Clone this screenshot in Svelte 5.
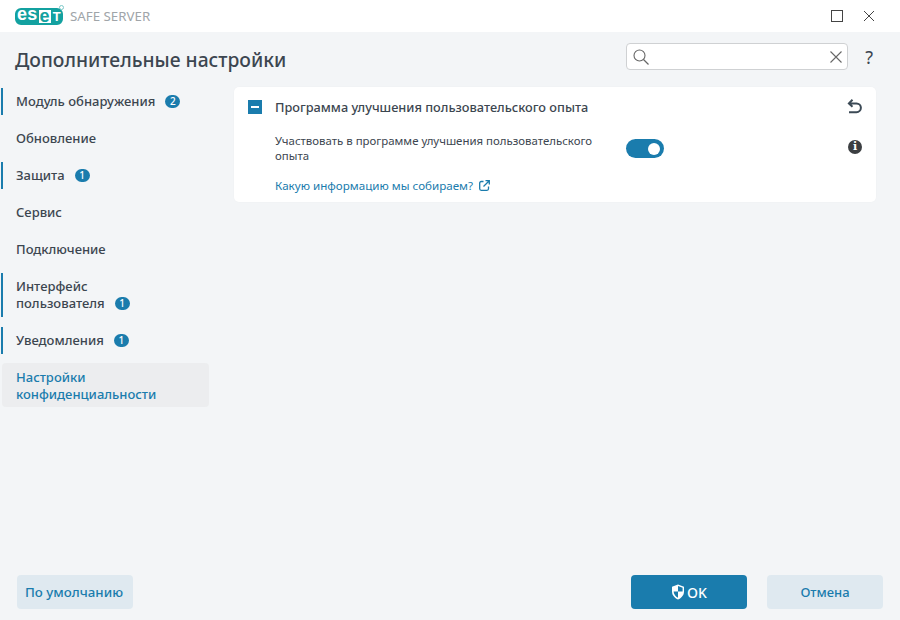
<script lang="ts">
  interface NavItem {
    label: string;
    badge?: number;
    marked?: boolean;
    active?: boolean;
  }

  const items: NavItem[] = [
    { label: "Модуль обнаружения", badge: 2, marked: true },
    { label: "Обновление" },
    { label: "Защита", badge: 1, marked: true },
    { label: "Сервис" },
    { label: "Подключение" },
    { label: "Интерфейс\nпользователя", badge: 1, marked: true },
    { label: "Уведомления", badge: 1, marked: true },
    { label: "Настройки\nконфиденциальности", active: true },
  ];

  let enabled = $state(true);
</script>

<div class="window">
  <header class="titlebar">
    <div class="brand">
      <span class="logo">
        <span class="logo-dark">es</span><span class="logo-light">e</span><span class="logo-t">T</span>
        <span class="reg"></span>
      </span>
      <span class="product">SAFE SERVER</span>
    </div>
    <div class="win-buttons">
      <span class="maximize"></span>
      <svg width="16" height="16" viewBox="0 0 16 16"><path d="M3 3l10 10M13 3L3 13" stroke="#444" stroke-width="1" fill="none" /></svg>
    </div>
  </header>

  <div class="top">
    <h1>Дополнительные настройки</h1>
    <div class="tools">
      <div class="search">
        <svg width="18" height="18" viewBox="0 0 18 18"><circle cx="7.5" cy="7.5" r="5.5" stroke="#666" stroke-width="1.1" fill="none" /><path d="M11.5 11.5l5 5" stroke="#666" stroke-width="1.3" fill="none" /></svg>
        <svg class="clear" width="14" height="14" viewBox="0 0 14 14"><path d="M1.5 1.5l11 11M12.5 1.5l-11 11" stroke="#666" stroke-width="1.1" fill="none" /></svg>
      </div>
      <span class="help">?</span>
    </div>
  </div>

  <div class="main">
    <nav class="sidebar">
      {#each items as item}
        <div class="nav-item" class:marked={item.marked} class:active={item.active}>
          <span class="nav-label">{item.label}{#if item.badge}<span class="badge">{item.badge}</span>{/if}</span>
        </div>
      {/each}
    </nav>

    <section class="content">
      <div class="card">
        <div class="card-head">
          <span class="collapse"></span>
          <span class="card-title">Программа улучшения пользовательского опыта</span>
          <svg class="revert" width="16" height="16" viewBox="0 0 16 16"><path d="M5.500 .8L1.900 4.400l3.600 3.400M2.500 4.400h7a4.400 4.400 0 0 1 0 8.800H2" stroke="#3c4a56" stroke-width="2" fill="none" /></svg>
        </div>
        <div class="setting">
          <span class="setting-text">Участвовать в программе улучшения пользовательского опыта</span>
          <button class="toggle" class:on={enabled} aria-label="toggle" onclick={() => (enabled = !enabled)}><span class="knob"></span></button>
          <span class="info">i</span>
        </div>
        <a class="link" href="#info">Какую информацию мы собираем?
          <svg width="11" height="11" viewBox="0 0 11 11"><path d="M4.500 1.500H2.200A1.500 1.500 0 0 0 .7 3v5.800a1.500 1.500 0 0 0 1.500 1.500H8a1.500 1.500 0 0 0 1.500-1.500V6.500M6.500 .7h3.800v3.800M10 1L4.500 6.500" stroke="#1a7cad" stroke-width="1.300" fill="none" /></svg>
        </a>
      </div>
    </section>
  </div>

  <footer class="footer">
    <button class="btn secondary default">По умолчанию</button>
    <div class="footer-right">
      <button class="btn primary">
        <svg width="14" height="16" viewBox="0 0 14 16"><path d="M7 .5l6 2.200v4.800c0 3.800-2.600 6.500-6 8-3.400-1.500-6-4.200-6-8V2.700z" fill="#fff" /><path d="M7 2l4.600 1.700V7.500H7zM7 7.500H2.600c.2 2.900 2.100 5 4.400 6.300z" fill="#1a7cad" /></svg>
        OK
      </button>
      <button class="btn secondary cancel">Отмена</button>
    </div>
  </footer>
</div>

<style>
  :global(body) {
    margin: 0;
    background: #f3f5f7;
  }

  .window {
    width: 900px;
    height: 620px;
    display: flex;
    flex-direction: column;
    font-family: "Noto Sans", "Open Sans", sans-serif;
    color: #3c4650;
    overflow: hidden;
    background: #f3f5f7;
  }

  .titlebar {
    height: 32px;
    flex: none;
    background: #fff;
    display: flex;
    align-items: center;
    justify-content: space-between;
    padding: 0 23px 0 15px;
  }

  .brand {
    display: flex;
    align-items: center;
    gap: 7px;
  }

  .logo {
    position: relative;
    display: inline-flex;
    align-items: center;
    justify-content: center;
    height: 17px;
    width: 48px;
    box-sizing: border-box;
    border: 2px solid #13a1a0;
    border-radius: 6px;
    background: #13a1a0;
    font-family: "Liberation Sans", sans-serif;
    font-weight: 700;
    font-size: 18px;
    line-height: 13px;
    letter-spacing: 0.3px;
  }

  .logo-dark {
    color: #fff;
    padding-bottom: 3px;
  }

  .logo-light {
    color: #13a1a0;
    background: #fff;
    padding: 0 1px 3px;
    height: 10px;
    margin: 0 1px;
  }

  .logo-t {
    color: #fff;
    font-size: 13px;
    margin-left: 1px;
  }

  .reg {
    position: absolute;
    right: -3px;
    top: -5px;
    width: 3px;
    height: 3px;
    border: 1px solid #7cc9c8;
    border-radius: 50%;
  }

  .product {
    font-size: 13.3px;
    color: #a0a5a9;
  }

  .win-buttons {
    display: flex;
    align-items: center;
    gap: 18px;
  }

  .maximize {
    width: 10px;
    height: 10px;
    border: 1px solid #444;
  }

  .top {
    height: 55px;
    flex: none;
    display: flex;
    align-items: center;
    justify-content: space-between;
    padding: 0 27px 0 15px;
    box-sizing: border-box;
  }

  h1 {
    margin: 0;
    font-size: 19.3px;
    font-weight: 500;
    color: #3c4650;
  }

  .tools {
    display: flex;
    align-items: center;
    gap: 17px;
    margin-bottom: 6px;
  }

  .search {
    width: 222px;
    height: 27px;
    box-sizing: border-box;
    background: #fff;
    border: 1px solid #cfd1d3;
    border-radius: 4px;
    display: flex;
    align-items: center;
    justify-content: space-between;
    padding: 0 4px 0 5px;
  }

  .help {
    font-size: 18px;
    color: #3c4650;
  }

  .main {
    flex: 1;
    display: flex;
    min-height: 0;
  }

  .sidebar {
    width: 208px;
    margin-left: 1px;
    flex: none;
    display: flex;
    flex-direction: column;
    gap: 10px;
    padding-top: 1px;
  }

  .nav-item {
    padding: 5px 10px 5px 13px;
    font-size: 13px;
    font-weight: 500;
    line-height: 17px;
    min-height: 27px;
    box-sizing: border-box;
    border-left: 2px solid transparent;
  }

  .nav-item.marked {
    border-left-color: #1a7cad;
  }

  .nav-item.active {
    background: #ecedef;
    border-radius: 4px;
    color: #1a7cad;
    border-left: 0;
    padding: 6px 10px 4px 14px;
    margin-left: 1px;
    margin-top: -1px;
  }

  .nav-label {
    display: block;
    white-space: pre-line;
  }

  .badge {
    display: inline-block;
    width: 15px;
    height: 13px;
    line-height: 13px;
    border-radius: 7px;
    background: #1a7cad;
    color: #fff;
    font-size: 10px;
    text-align: center;
    margin-left: 10px;
    vertical-align: 1px;
  }

  .content {
    flex: 1;
    padding-left: 25px;
    padding-right: 24px;
  }

  .card {
    background: #fff;
    border-radius: 5px;
    box-shadow: 0 0 2px rgba(0, 0, 0, 0.03);
    height: 115px;
    box-sizing: border-box;
    padding: 0 14px;
  }

  .card-head {
    height: 40px;
    display: flex;
    align-items: center;
  }

  .collapse {
    width: 14px;
    height: 14px;
    background: #1a7cad;
    position: relative;
    margin-right: 13px;
  }

  .collapse::after {
    content: "";
    position: absolute;
    left: 3px;
    right: 3px;
    top: 6px;
    height: 2px;
    background: #fff;
  }

  .card-title {
    flex: 1;
    font-size: 12.75px;
    font-weight: 500;
  }

  .revert {
    margin-right: -1px;
  }

  .setting {
    display: flex;
    align-items: flex-start;
    padding-left: 27px;
    margin-top: 6px;
  }

  .setting-text {
    width: 351px;
    padding-right: 20px;
    box-sizing: border-box;
    font-size: 11.43px;
    line-height: 15px;
    color: #3c4650;
  }

  .toggle {
    width: 38px;
    height: 19px;
    border: 0;
    padding: 0;
    border-radius: 10px;
    background: #b4bcc2;
    position: relative;
    cursor: pointer;
    margin-top: 6px;
  }

  .toggle.on {
    background: #1a7cad;
  }

  .knob {
    position: absolute;
    width: 12px;
    height: 12px;
    top: 3.5px;
    left: 3px;
    border-radius: 50%;
    background: #fff;
  }

  .toggle.on .knob {
    left: 22px;
  }

  .info {
    width: 14px;
    height: 14px;
    border-radius: 50%;
    background: #3c3f42;
    color: #fff;
    font-family: "DejaVu Serif", serif;
    font-weight: 700;
    font-size: 11px;
    line-height: 14px;
    text-align: center;
    margin-left: auto;
    margin-top: 7px;
  }

  .link {
    display: flex;
    align-items: center;
    gap: 6px;
    margin-top: 15px;
    padding-left: 27px;
    font-size: 11.62px;
    line-height: 15px;
    color: #1a7cad;
    text-decoration: none;
  }

  .footer {
    height: 45px;
    flex: none;
    display: flex;
    justify-content: space-between;
    padding: 0 17px;
    box-sizing: border-box;
  }

  .footer-right {
    display: flex;
    gap: 20px;
  }

  .btn {
    height: 34px;
    border: 0;
    border-radius: 4px;
    font-family: inherit;
    font-size: 13px;
    font-weight: 500;
    padding: 0 8px;
    cursor: pointer;
  }

  .default {
    width: 116px;
    font-size: 13.3px;
    text-align: left;
  }

  .secondary {
    background: #dfe9f0;
    color: #1a7cad;
  }

  .primary {
    background: #1a7cad;
    color: #fff;
    width: 116px;
    display: flex;
    align-items: center;
    justify-content: center;
    gap: 2px;
    font-size: 14px;
  }

  .cancel {
    width: 116px;
  }
</style>
